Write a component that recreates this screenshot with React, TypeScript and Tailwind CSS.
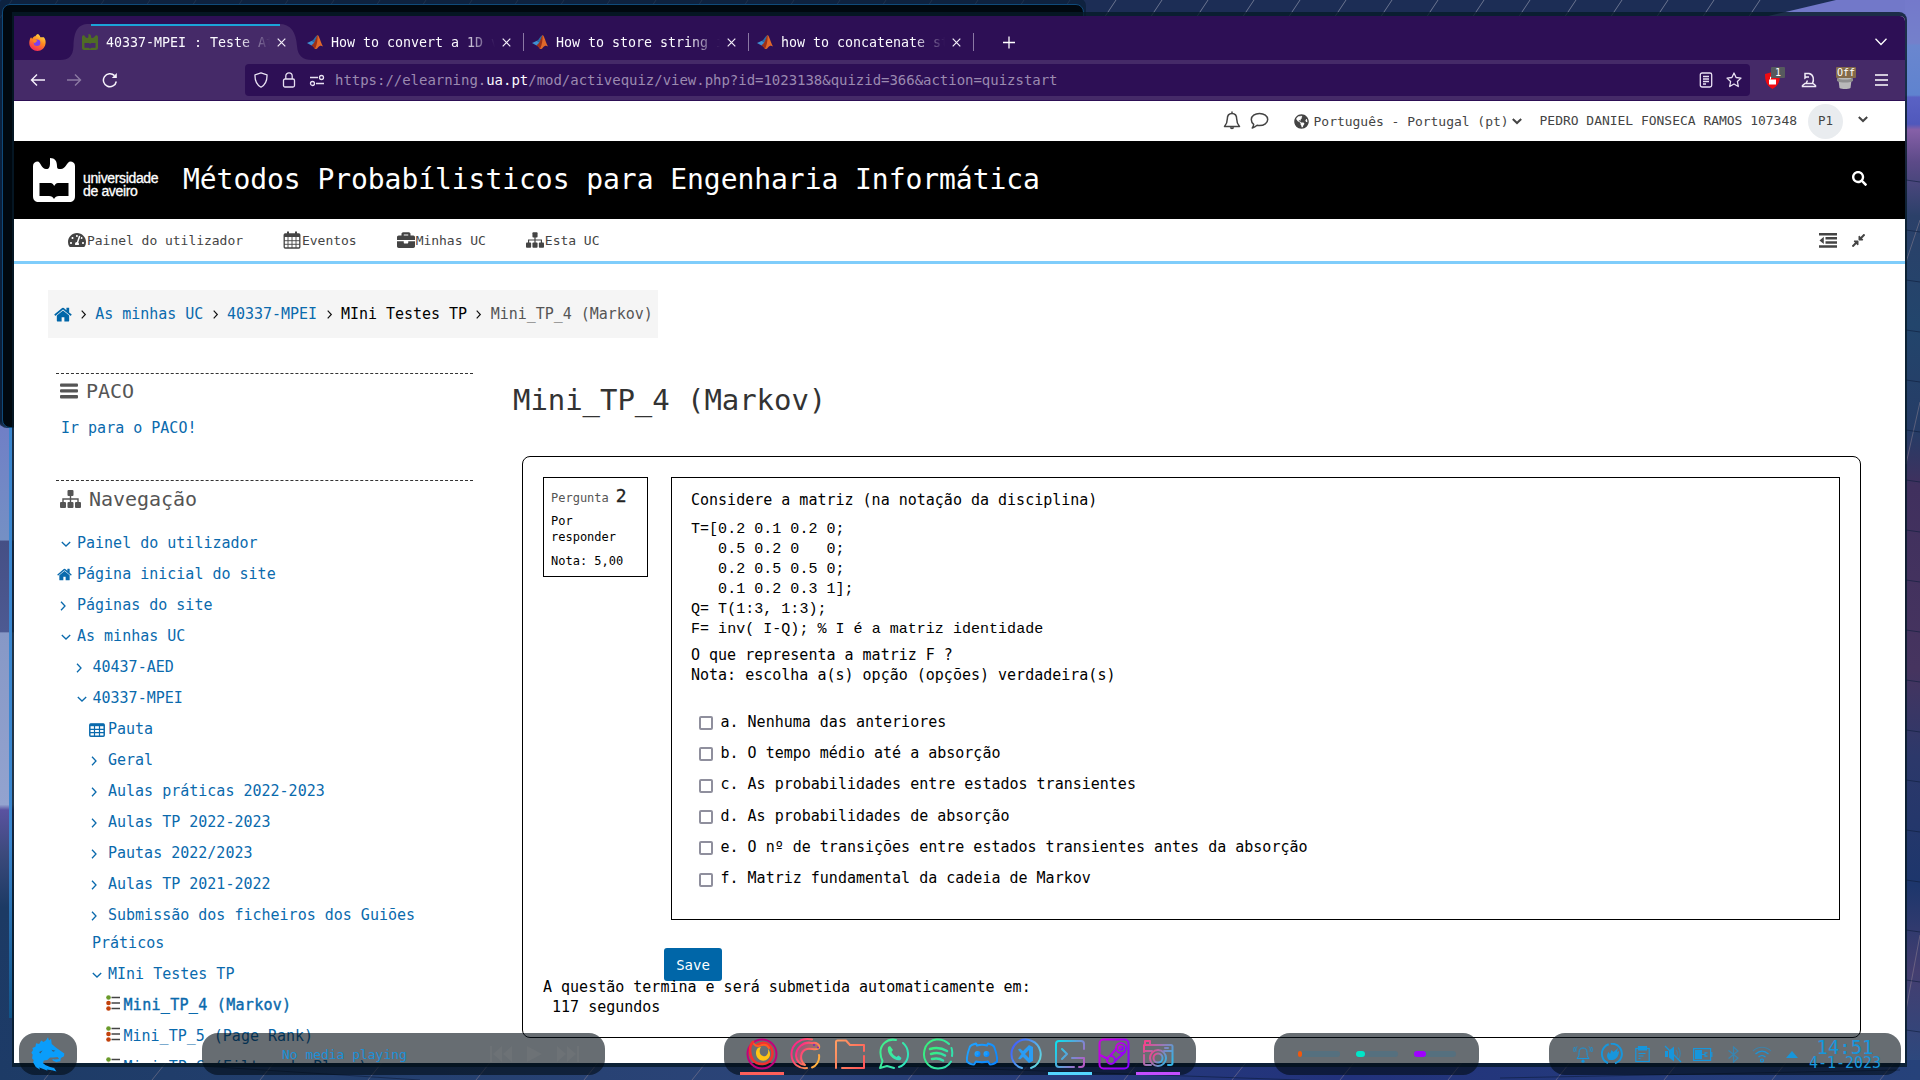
import React from "react";
import { FaTachometerAlt, FaBriefcase, FaCompressAlt, FaSearch, FaGlobeAmericas } from "react-icons/fa";

const mono = "font-['DejaVu_Sans_Mono',monospace] tracking-[-0.002em]";
const monoBody = "font-['DejaVu_Sans_Mono',monospace] tracking-normal";

/* ---------- Desktop ---------- */

function Wallpaper() {
  return (
    <svg className="absolute inset-0" width="1920" height="1080" viewBox="0 0 1920 1080">
      <defs>
        <linearGradient id="wl" x1="0" y1="0" x2="0" y2="1">
          <stop offset="0" stopColor="#10305c" />
          <stop offset="0.39" stopColor="#0c1a35" />
          <stop offset="0.395" stopColor="#707fc6" />
          <stop offset="0.5" stopColor="#7590c4" />
          <stop offset="0.501" stopColor="#454f85" />
          <stop offset="0.585" stopColor="#4d5a92" />
          <stop offset="0.586" stopColor="#8798c6" />
          <stop offset="0.745" stopColor="#93a3cf" />
          <stop offset="0.75" stopColor="#5a52a0" />
          <stop offset="0.79" stopColor="#3c4a7c" />
          <stop offset="0.84" stopColor="#1c3a64" />
          <stop offset="1" stopColor="#1d3b68" />
        </linearGradient>
        <linearGradient id="wr" x1="0" y1="0" x2="0" y2="1">
          <stop offset="0" stopColor="#7479cb" />
          <stop offset="0.04" stopColor="#7480cb" />
          <stop offset="0.042" stopColor="#6a86cf" />
          <stop offset="0.088" stopColor="#5f83cf" />
          <stop offset="0.09" stopColor="#5a62c4" />
          <stop offset="0.115" stopColor="#5058bc" />
          <stop offset="0.12" stopColor="#8660a8" />
          <stop offset="0.15" stopColor="#5c4a88" />
          <stop offset="0.2" stopColor="#2b4069" />
          <stop offset="0.3" stopColor="#22456c" />
          <stop offset="0.4" stopColor="#263c66" />
          <stop offset="0.45" stopColor="#40305e" />
          <stop offset="0.62" stopColor="#46345f" />
          <stop offset="0.7" stopColor="#2c386a" />
          <stop offset="0.82" stopColor="#1d366c" />
          <stop offset="0.9" stopColor="#443e70" />
          <stop offset="1" stopColor="#284a80" />
        </linearGradient>
        <linearGradient id="wb" x1="0" y1="0" x2="1" y2="0">
          <stop offset="0" stopColor="#1d3b66" />
          <stop offset="0.4" stopColor="#2b4478" />
          <stop offset="0.7" stopColor="#22327c" />
          <stop offset="1" stopColor="#26427a" />
        </linearGradient>
      </defs>
      <rect width="1920" height="1080" fill="#1c2d55" />
      <rect width="20" height="1080" fill="url(#wl)" />
      <rect x="1900" width="20" height="1080" fill="url(#wr)" />
      <g stroke="#8c93a8" strokeWidth="1" opacity="0.7">
        {Array.from({ length: 39 }, (_, i) => (
          <line key={i} x1={12 + i * 46} y1="0" x2={i * 46} y2="18" />
        ))}
      </g>
      <polygon points="1760,18 1836,0 1905,0 1905,18" fill="#7278c9" />
      <rect y="1060" width="1920" height="20" fill="url(#wb)" />
      <g stroke="#9a8a96" strokeWidth="1" opacity="0.45">
        {Array.from({ length: 18 }, (_, i) => (
          <line key={i} x1={60 + i * 108} y1="1060" x2={44 + i * 108} y2="1080" />
        ))}
        <line x1="1920" y1="220" x2="1906" y2="262" />
        <line x1="1920" y1="402" x2="1906" y2="464" />
        <line x1="1920" y1="935" x2="1906" y2="1010" />
      </g>
      <g stroke="#0d1c3c" strokeWidth="1" opacity="0.6">
        {Array.from({ length: 18 }, (_, i) => (
          <line key={i} x1="1906" y1={180 + i * 50} x2="1920" y2={182 + i * 50} />
        ))}
        <line x1="200" y1="1066" x2="420" y2="1080" />
        <line x1="900" y1="1066" x2="1300" y2="1080" />
        <line x1="1500" y1="1078" x2="1900" y2="1070" />
      </g>
    </svg>
  );
}

/* ---------- Browser chrome ---------- */

function FirefoxIcon() {
  return (
    <svg width="17" height="17" viewBox="0 0 16 16">
      <defs>
        <linearGradient id="ff" x1="0.8" y1="0" x2="0.3" y2="1">
          <stop offset="0" stopColor="#ffe14d" />
          <stop offset="0.45" stopColor="#ff8a1e" />
          <stop offset="1" stopColor="#f5245c" />
        </linearGradient>
      </defs>
      <path d="M8.500 0c1.200 1 2 2 2.200 3 1 .2 2.800-.2 3.300 0 1.500 2 2 4 1.500 6.500C14.800 13.500 11.800 16 8 16S.8 13.200.3 9.500C0 6.500 1 4 2 3c.3.800.6 1.200 1 1.400C4 2.500 5 2 6 2c.5-.9 1.500-1.800 2.500-2z" fill="url(#ff)" />
      <circle cx="7.600" cy="8.200" r="3.100" fill="#7b3ff0" />
      <path d="M4 5.500c2-.6 4 .2 4 1.400-1.200 0-2 .7-2 1.700-1.500 0-2.500-1.500-2-3.100z" fill="#ff8a1e" />
    </svg>
  );
}

function MatlabIcon() {
  return (
    <svg width="16" height="16" viewBox="0 0 16 16">
      <path d="M0 9l5-2.200 2.500 2L4.500 11.500z" fill="#3f8fd0" />
      <path d="M5 6.800C7.500 5.500 8 2 10.500 1L7.500 8.800z" fill="#2a6ea8" />
      <path d="M10.500 1C12.500 2 13.500 8 16 12.500c-2-1.500-3.500-1-5 1-1 1.500-2 1.800-3 1.500-.6-1.500-2-3-3.500-3.500C8 10 9 4.500 10.500 1z" fill="#e0682a" />
      <path d="M10.500 1C11 5 10 11 8 15c-.6-1.500-2-3-3.500-3.500C8 10 9 4.500 10.500 1z" fill="#9c2f18" />
    </svg>
  );
}

function Castle({ size, w, fill, page }: { size: number; w: number; fill: string; page: string }) {
  return (
    <svg width={w} height={size} viewBox="0 0 42 44" preserveAspectRatio="none">
      <path
        d="M0 8C0 5 2 3.500 5 3.500c2.500 1 4 7.500 8 7.500h1.500c3-1 2.500-6 2.500-11 5 0 7 3 7 8 0 2 .5 3 2 3h2c4 0 6-6.500 9-7.500C40 3.500 42 5 42 8v30c0 4-2 6-6 6H6c-4 0-6-2-6-6z"
        fill={fill}
      />
      <path d="M6.500 25h11c2 0 3 1.500 3.700 3 .7-1.500 1.900-3 3.800-3h10.500v13H26c-2.500 0-4 1-5 3-1-2-2.500-3-5-3H6.500z" fill={page} />
    </svg>
  );
}

function Close() {
  return (
    <svg width="9" height="9" viewBox="0 0 9 9" stroke="#f3eef8" strokeWidth="1.200">
      <path d="M.7.7l7.600 7.600M8.300.7L.7 8.300" />
    </svg>
  );
}

function Tab({ icon, title }: { icon: React.ReactNode; title: string }) {
  return (
    <div className="relative flex h-9 w-[225px] items-center pl-2">
      <span className="flex w-4 justify-center">{icon}</span>
      <span
        className={`ml-2 mt-px w-[164px] overflow-hidden whitespace-nowrap text-[13.33px] text-[#fbfaff] [mask-image:linear-gradient(to_left,transparent,black_2em)] ${mono}`}
      >
        {title}
      </span>
      <span className="ml-1.5 flex w-2.5 justify-center">
        <Close />
      </span>
    </div>
  );
}

function TabStrip() {
  return (
    <div className="flex h-11 items-start bg-[#2d0f55] pt-2">
      <div className="flex h-9 w-[60px] items-center pl-[15px]">
        <FirefoxIcon />
      </div>
      <div className="relative">
        <svg className="absolute -left-[14px] top-0" width="252" height="36" viewBox="0 0 252 36">
          <path d="M0 36c9 0 13-4 13.500-14C14 8 17 0 29 0h190c12 0 17 8 18 22 .7 10 6 14 15 14z" fill="#452a68" />
          <rect x="31" width="189" height="2" fill="#1ba3d8" />
        </svg>
        <Tab icon={<Castle w={16} size={16} fill="#4f6b26" page="#452a68" />} title="40337-MPEI : Teste At" />
      </div>
      {["How to convert a 1D v", "How to store string i", "how to concatenate st"].map((t) => (
        <div key={t} className="relative">
          <Tab icon={<MatlabIcon />} title={t} />
          <span className="absolute right-0 top-[9px] h-[18px] w-px bg-[#8a78a4]" />
        </div>
      ))}
      <svg className="ml-[29px] mt-3" width="12" height="13" viewBox="0 0 12 13" stroke="#fff" strokeWidth="1.300">
        <path d="M6 .5v12M0 6.500h12" />
      </svg>
      <svg className="ml-auto mr-[18px] mt-[14px]" width="12" height="8" viewBox="0 0 12 8" fill="none" stroke="#fff" strokeWidth="1.300">
        <path d="M.5.8L6 6.500 11.500.8" />
      </svg>
    </div>
  );
}

function Toolbar() {
  return (
    <div className="flex h-[41px] items-center border-b border-[#2d0f55] bg-[#452a68] text-[#f6f2fb]">
      <svg className="ml-4" width="16" height="16" viewBox="0 0 16 16" fill="none" stroke="currentColor" strokeWidth="1.400">
        <path d="M15 8H1.500M7 2.500L1.500 8 7 13.500" />
      </svg>
      <svg className="ml-5 opacity-40" width="16" height="16" viewBox="0 0 16 16" fill="none" stroke="currentColor" strokeWidth="1.400">
        <path d="M1 8h13.500M9 2.500L14.500 8 9 13.500" />
      </svg>
      <svg className="ml-5" width="16" height="16" viewBox="0 0 16 16" fill="none" stroke="currentColor" strokeWidth="1.500">
        <path d="M14.300 9.500A6.500 6.500 0 1 1 12.500 3.600" />
        <path d="M14.800 1v5h-5z" fill="currentColor" stroke="none" />
      </svg>
      <div className="ml-[127px] flex h-8 w-[1505px] items-center rounded bg-[#2d0f55]">
        <svg className="ml-2" width="16" height="16" viewBox="0 0 16 16" fill="none" stroke="#e8e0f2" strokeWidth="1.300">
          <path d="M8 .8l6 2c.2 5-.8 9.500-6 12.400C2.800 12.300 1.800 7.800 2 2.800z" strokeLinejoin="round" />
        </svg>
        <svg className="ml-3" width="16" height="16" viewBox="0 0 16 16" fill="none" stroke="#e8e0f2" strokeWidth="1.300">
          <rect x="2.500" y="7" width="11" height="8" rx="1.500" />
          <path d="M4.800 7V4a3.200 3.200 0 0 1 6.400 0v3" />
        </svg>
        <svg className="ml-3" width="16" height="16" viewBox="0 0 16 16" fill="none" stroke="#e8e0f2" strokeWidth="1.300">
          <path d="M1 5.500h8M7 11.500h8" />
          <circle cx="12.500" cy="5.500" r="2" />
          <circle cx="3.500" cy="11.500" r="2" />
        </svg>
        <span className={`ml-[10px] whitespace-pre text-[14px] text-[#9b8ab0] ${mono}`}>
          https://elearning.<span className="text-[#fbfaff]">ua.pt</span>/mod/activequiz/view.php?id=1023138&amp;quizid=366&amp;action=quizstart
        </span>
        <svg className="ml-auto" width="14" height="16" viewBox="0 0 14 16" fill="none" stroke="#e8e0f2" strokeWidth="1.300">
          <rect x="1.300" y="1" width="11.400" height="14" rx="1.800" />
          <path d="M4 4.500h6M4 7h6M4 9.500h6M4 12h3" />
        </svg>
        <svg className="ml-[13px] mr-2" width="16" height="16" viewBox="0 0 16 16" fill="none" stroke="#e8e0f2" strokeWidth="1.300">
          <path d="M8 1l2.100 4.500 4.900.6-3.600 3.400.9 5L8 12l-4.300 2.500.9-5L1 6.100l4.900-.6z" strokeLinejoin="round" />
        </svg>
      </div>
      <div className="relative ml-[15px] flex h-8 w-4 items-center">
        <svg width="15" height="17" viewBox="0 0 15 17">
          <path d="M7.500 0L15 2c0 6-1 11.500-7.500 15C1 13.500 0 8 0 2z" fill="#ef0b12" />
          <rect x="4" y="7.500" width="7" height="5" fill="#fff" />
          <path d="M5.500 7.500V5h4" fill="none" stroke="#fff" />
        </svg>
        <span className={`absolute left-[6px] top-[3px] flex h-[11px] w-[14px] items-center justify-center rounded-[1px] bg-[#565a5e] text-[10px] leading-none text-white ${mono}`}>1</span>
      </div>
      <svg className="ml-5" width="16" height="16" viewBox="0 0 16 16" fill="none" stroke="#f0eaf6" strokeWidth="1.500">
        <path d="M1.500 14.500h13v-1l-2.500-2h-8l-2.500 2zM5 11.500l1.500-3M11.500 11.500c1.500-3.500 1.500-9-3.500-10H4v4.500l1.500-1 2.500 0" />
      </svg>
      <div className="relative ml-5 flex h-8 w-4 items-center">
        <svg width="16" height="17" viewBox="0 0 16 17">
          <path d="M1 4h14l-1.500 12c-2.500 1.300-8.500 1.300-11 0z" fill="#b9b9b9" />
          <path d="M0 6c4 2 12 2 16 0v3c-4 2-12 2-16 0z" fill="#8f8f8f" />
        </svg>
        <span className={`absolute -left-px top-[3px] flex h-[11px] w-5 items-center justify-center rounded-[1px] bg-[#836a4a] text-[10px] leading-none text-white ${mono}`}>Off</span>
      </div>
      <svg className="ml-[22px]" width="13" height="12" viewBox="0 0 13 12" stroke="#fff" strokeWidth="1.300">
        <path d="M0 1h13M0 6h13M0 11h13" />
      </svg>
    </div>
  );
}

/* ---------- Page icons ---------- */

function HomeIcon({ className = "" }: { className?: string }) {
  return (
    <svg className={className} viewBox="60 190 1672 1400" fill="currentColor">
      <path d="M1472 992v480q0 26-19 45t-45 19h-384v-384H768v384H384q-26 0-45-19t-19-45V992q0-1 .5-3t.5-3l575-474 575 474q1 2 1 6zm223-69l-62 74q-8 9-21 11h-3q-13 0-21-7L896 424 204 1001q-12 8-24 7-13-2-21-11l-62-74q-8-10-7-23.500T101 878l719-599q32-26 76-26t76 26l244 204V288q0-14 9-23t23-9h192q14 0 23 9t9 23v408l219 182q10 8 11 21.500t-7 23.500z" />
    </svg>
  );
}

function BarsIcon() {
  return (
    <svg width="18" height="16" viewBox="0 0 18 16" fill="currentColor">
      <rect y="0.500" width="18" height="3.300" rx="1" />
      <rect y="6.300" width="18" height="3.300" rx="1" />
      <rect y="12.100" width="18" height="3.300" rx="1" />
    </svg>
  );
}

function TreeIcon({ className = "" }: { className?: string }) {
  return (
    <svg className={className} viewBox="0 0 21 18" fill="currentColor">
      <rect x="7.500" width="6" height="6" rx="1" />
      <rect y="12" width="6" height="6" rx="1" />
      <rect x="7.500" y="12" width="6" height="6" rx="1" />
      <rect x="15" y="12" width="6" height="6" rx="1" />
      <path d="M10.500 5v8M3 13V9h15v4" fill="none" stroke="currentColor" strokeWidth="1.400" />
    </svg>
  );
}

function CalendarIcon({ className = "" }: { className?: string }) {
  return (
    <svg className={className} viewBox="0 0 18 18" fill="none" stroke="currentColor">
      <rect x="1.200" y="3" width="15.600" height="14" rx="1" strokeWidth="1.300" />
      <path d="M1 4.500h16" strokeWidth="3" />
      <path d="M5 6v11M9 6v11M13 6v11M1 9.700h16M1 13.300h16" strokeWidth="0.900" />
      <path d="M5 .5v4M13 .5v4" strokeWidth="2" />
    </svg>
  );
}

function TableIcon() {
  return (
    <svg className="mr-[3px]" width="16" height="14" viewBox="0 0 16 14" fill="none" stroke="currentColor">
      <rect x=".8" y="1" width="14.400" height="12.200" rx="1" strokeWidth="1.500" />
      <path d="M1 2h14" strokeWidth="2.400" />
      <path d="M5.500 2v11M10.500 2v11M1 6.300h14M1 9.700h14" strokeWidth="1.200" />
    </svg>
  );
}

function OutdentIcon() {
  return (
    <svg width="18" height="15" viewBox="0 0 18 15" fill="currentColor">
      <path d="M0 0h18v2.500H0zM6.500 4.100H18v2.500H6.500zM6.500 8.200H18v2.500H6.500zM0 12.300h18v2.500H0zM4.800 3.800v7.200L.5 7.400z" />
    </svg>
  );
}

function Chevron({ dir, className = "", w = 1.3 }: { dir: "right" | "down"; className?: string; w?: number }) {
  return (
    <svg className={className} width="10" height="10" viewBox="0 0 10 10" fill="none" stroke="currentColor" strokeWidth={w}>
      <path d={dir === "right" ? "M3 .8L7 5 3 9.200" : "M.8 3L5 7l4.200-4"} />
    </svg>
  );
}

/* ---------- Page ---------- */

function UserBar() {
  return (
    <div className={`flex h-10 items-center justify-end text-[13px] text-[#444] ${mono}`}>
      <svg className="-mt-0.5" width="18" height="19" viewBox="0 0 18 19" fill="none" stroke="#444" strokeWidth="1.500">
        <path d="M9 2.500C5.800 2.500 4.300 5 4.300 8c0 4-1.300 5.800-2.800 7.500h15c-1.500-1.700-2.800-3.500-2.800-7.500 0-3-1.500-5.500-4.700-5.500zM9 .5v2" strokeLinejoin="round" />
        <path d="M6.800 16.300h4.400c-.2 1.300-1 2-2.200 2s-2-.7-2.200-2z" fill="#444" stroke="none" />
      </svg>
      <svg className="-mt-0.5 ml-[9px]" width="19" height="17" viewBox="0 0 19 17" fill="none" stroke="#444" strokeWidth="1.500">
        <path d="M9.500 1.500c4.600 0 8.200 2.600 8.200 6s-3.600 6-8.200 6c-.8 0-1.600-.1-2.400-.2C5.800 14.500 4.300 15.500 2.300 16c.7-1 1.300-2 1.400-3.700C2.200 11.200 1.300 9.500 1.300 7.500c0-3.400 3.600-6 8.200-6z" strokeLinejoin="round" />
      </svg>
      <FaGlobeAmericas className="ml-[25px] text-[15px]" />
      <span className="ml-[5px] mt-px whitespace-nowrap">Português - Portugal (pt)</span>
      <Chevron dir="down" w={2} className="ml-[3px]" />
      <span className="ml-[18px] whitespace-nowrap">PEDRO DANIEL FONSECA RAMOS 107348</span>
      <span className="ml-[11px] flex size-[35px] items-center justify-center rounded-full bg-[#e9ecef] pt-px text-[12.5px]">P1</span>
      <Chevron dir="down" w={2} className="-mt-1 ml-[15px] mr-[37px]" />
    </div>
  );
}

function SiteHeader() {
  return (
    <header className="flex h-[78px] items-center bg-black pl-[19px] text-white">
      <Castle w={42} size={44} fill="#fff" page="#000" />
      <div className="ml-2 mt-[9px] w-[100px] whitespace-nowrap font-['Liberation_Sans',sans-serif] text-[14px] leading-[13px] tracking-[-0.35px] [-webkit-text-stroke:0.3px_white]">
        universidade
        <br />
        de aveiro
      </div>
      <h1 className={`whitespace-nowrap text-[28px] leading-[34px] ${mono}`}>
        Métodos Probabílisticos para Engenharia Informática
      </h1>
      <FaSearch className="-mt-[3px] ml-auto mr-[38px] text-[15px]" />
    </header>
  );
}

function MenuBar() {
  const items = [
    { icon: FaTachometerAlt, label: "Painel do utilizador" },
    { icon: CalendarIcon, label: "Eventos" },
    { icon: FaBriefcase, label: "Minhas UC" },
    { icon: TreeIcon, label: "Esta UC" },
  ];
  return (
    <nav className={`flex h-[45px] items-center gap-10 border-b-[3px] border-[#7fcdfb] pl-[54px] text-[13px] text-[#444] ${mono}`}>
      {items.map(({ icon: Icon, label }) => (
        <span key={label} className="flex items-center gap-px whitespace-nowrap">
          <Icon className="size-[18px]" />
          <span className="mt-px">{label}</span>
        </span>
      ))}
      <span className="ml-auto mr-[39px] flex items-center gap-[14px]">
        <OutdentIcon />
        <FaCompressAlt className="size-[15px]" />
      </span>
    </nav>
  );
}

function Breadcrumb() {
  const parts = [
    { t: "As minhas UC", c: "text-[#0a6aad]" },
    { t: "40337-MPEI", c: "text-[#0a6aad]" },
    { t: "MIni Testes TP", c: "text-black" },
    { t: "Mini_TP_4 (Markov)", c: "text-[#555]" },
  ];
  return (
    <div className={`ml-[34px] mt-[26px] flex h-12 w-[610px] items-center bg-[#f5f5f5] pl-[5.5px] text-[15px] ${mono}`}>
      <HomeIcon className="h-[15px] w-[18px] text-[#0066a8]" />
      {parts.map((p) => (
        <React.Fragment key={p.t}>
          <span className="flex w-[23.8px] justify-center text-[#111]">
            <Chevron dir="right" className="size-[9px]" />
          </span>
          <span className={`whitespace-nowrap ${p.c}`}>{p.t}</span>
        </React.Fragment>
      ))}
    </div>
  );
}

function QuizIcon() {
  return (
    <svg width="14" height="16" viewBox="0 0 14 16">
      <circle cx="2.500" cy="2.500" r="2.300" fill="#6a9a2a" />
      <circle cx="2.500" cy="8" r="2.300" fill="#c2410c" />
      <circle cx="2.500" cy="13.500" r="2.300" fill="#c2410c" />
      <path d="M5.500 2.500H14M5.500 8H14M5.500 13.500H14" stroke="#444" strokeWidth="1.600" />
    </svg>
  );
}

type NavRow = { icon: "right" | "down" | "home" | "table" | "quiz"; label: string; level: 0 | 1 | 2 | 3; bold?: boolean; wrap?: string };

const navRows: NavRow[] = [
  { icon: "down", label: "Painel do utilizador", level: 0 },
  { icon: "home", label: "Página inicial do site", level: 0 },
  { icon: "right", label: "Páginas do site", level: 0 },
  { icon: "down", label: "As minhas UC", level: 0 },
  { icon: "right", label: "40437-AED", level: 1 },
  { icon: "down", label: "40337-MPEI", level: 1 },
  { icon: "table", label: "Pauta", level: 2 },
  { icon: "right", label: "Geral", level: 2 },
  { icon: "right", label: "Aulas práticas 2022-2023", level: 2 },
  { icon: "right", label: "Aulas TP 2022-2023", level: 2 },
  { icon: "right", label: "Pautas 2022/2023", level: 2 },
  { icon: "right", label: "Aulas TP 2021-2022", level: 2 },
  { icon: "right", label: "Submissão dos ficheiros dos Guiões", level: 2, wrap: "Práticos" },
  { icon: "down", label: "MIni Testes TP", level: 2 },
  { icon: "quiz", label: "Mini_TP_4 (Markov)", level: 3, bold: true },
  { icon: "quiz", label: "Mini_TP_5 (Page Rank)", level: 3 },
  { icon: "quiz", label: "Mini_TP_6 (Filtro de Bloom)", level: 3 },
];

const indent = ["pl-0", "pl-[15.5px]", "pl-[31px]", "pl-[46.5px]"];

function NavIcon({ icon }: { icon: NavRow["icon"] }) {
  if (icon === "home") return <HomeIcon className="mr-[5px] h-[13px] w-[15px]" />;
  if (icon === "table") return <TableIcon />;
  if (icon === "quiz")
    return (
      <span className="mb-1.5 mr-1">
        <QuizIcon />
      </span>
    );
  return <Chevron dir={icon} className={icon === "down" ? "mr-1.5" : "mr-[9px]"} />;
}

function Sidebar() {
  return (
    <aside className={`w-[417px] shrink-0 pt-[35px] text-[15px] text-[#0a6aad] ${monoBody}`}>
      <section className="h-[107px] border-t border-dashed border-[#333]">
        <h2 className={`flex h-[34px] items-center gap-2 pl-1 text-[20px] text-[#555] ${mono}`}>
          <BarsIcon />
          PACO
        </h2>
        <p className="mt-1 pl-[5px] leading-[32px]">Ir para o PACO!</p>
      </section>
      <section className="border-t border-dashed border-[#333]">
        <h2 className={`flex h-9 items-center gap-2 pl-1 text-[20px] text-[#555] ${mono}`}>
          <TreeIcon className="h-[18px] w-[21px]" />
          Navegação
        </h2>
        <ul className="mt-[11px]">
          {navRows.map((r) => (
            <li key={r.label} className={indent[r.level]}>
              <div className="flex h-[31px] items-center whitespace-nowrap">
                <span className="flex w-[21px] shrink-0 justify-end">
                  <NavIcon icon={r.icon} />
                </span>
                <span className={r.bold ? "tracking-[0.3px] [-webkit-text-stroke:0.4px_#0a6aad]" : ""}>{r.label}</span>
              </div>
              {r.wrap && <div className="h-7 pl-[5px] leading-[24px]">{r.wrap}</div>}
            </li>
          ))}
        </ul>
      </section>
    </aside>
  );
}

const code = `T=[0.2 0.1 0.2 0;
   0.5 0.2 0   0;
   0.2 0.5 0.5 0;
   0.1 0.2 0.3 1];
Q= T(1:3, 1:3);
F= inv( I-Q); % I é a matriz identidade`;

const answers = [
  "a. Nenhuma das anteriores",
  "b. O tempo médio até a absorção",
  "c. As probabilidades entre estados transientes",
  "d. As probabilidades de absorção",
  "e. O nº de transições entre estados transientes antes da absorção",
  "f. Matriz fundamental da cadeia de Markov",
];

function Quiz() {
  return (
    <main className={`pl-[39px] pt-[41px] text-[15px] leading-5 text-black ${monoBody}`}>
      <h2 className={`pl-px text-[29px] leading-[42px] text-[#333] ${mono}`}>Mini_TP_4 (Markov)</h2>
      <div className="ml-[10px] mt-[35px] h-[582px] w-[1339px] rounded-[8px] border border-black pl-5 pt-5">
        <div className="flex items-start gap-[23px]">
          <div className="h-[100px] w-[105px] border border-black pl-[7px] text-[12px] leading-4">
            <p className="mt-2 flex h-5 items-baseline gap-[7px] text-[#555]">
              Pergunta <span className="text-[18px] leading-5 text-[#222] [-webkit-text-stroke:0.3px_#222]">2</span>
            </p>
            <p className="mt-[7px]">
              Por
              <br />
              responder
            </p>
            <p className="mt-2">Nota: 5,00</p>
          </div>
          <div className="h-[443px] w-[1169px] border border-black pl-[19px] pt-3">
            <p>Considere a matriz (na notação da disciplina)</p>
            <pre className="mt-[10px] font-['Liberation_Mono',monospace] text-[15px] leading-5 tracking-[0.03px]">{code}</pre>
            <p className="mt-[5px]">
              O que representa a matriz F ?
              <br />
              Nota: escolha a(s) opção (opções) verdadeira(s)
            </p>
            <div className="mt-[21px]">
              {answers.map((a) => (
                <label key={a} className="flex h-[31.3px] items-center pl-2">
                  <span className="mt-[3px] size-[14px] rounded-[2px] border-2 border-[#8f8f9d] bg-white" />
                  <span className="ml-[7.5px] whitespace-nowrap">{a}</span>
                </label>
              ))}
            </div>
          </div>
        </div>
        <button className="ml-[121px] mt-7 block h-[33px] w-[58px] rounded-[3px] bg-[#0066a8] text-[14px] text-white">Save</button>
        <div className="relative -mt-1 whitespace-pre">
          {"A questão termina e será submetida automaticamente em:\n 117 segundos"}
        </div>
      </div>
    </main>
  );
}

function Browser() {
  return (
    <div className="absolute left-3 top-3 h-[1055px] w-[1895px] overflow-hidden rounded-tr-[8px] bg-[#061a28]/80 px-0.5 pt-1">
      <div className="h-[1047px] w-[1891px] overflow-hidden rounded-tr-[5px] bg-white">
        <TabStrip />
        <Toolbar />
        <UserBar />
        <SiteHeader />
        <MenuBar />
        <Breadcrumb />
        <div className="ml-[42px] flex items-start">
          <Sidebar />
          <Quiz />
        </div>
      </div>
    </div>
  );
}

/* ---------- Dock ---------- */

const panel = "absolute top-[1033px] h-[42px] rounded-[16px] bg-[#020c14]/60";

function Wolf() {
  return (
    <svg width="34" height="35" viewBox="0 0 100 102" fill="#0a9dfb">
      <polygon points="50,0 53,10 59,5 61,20 74,31 98,48 97,56 88,61 86,71 74,73 64,69 63,64 70,66 83,64 78,58 66,60 56,60 48,67 38,69 35,76 42,82 54,87 68,91 75,101 62,97 46,95 49,99 34,93 24,89 27,96 14,88 6,74 8,68 3,62 5,52 1,46 6,38 4,32 13,28 15,18 24,20 30,10 37,14 44,9" />
      <path d="M60 37l12 3-7 3zM24 44l10-5-7 9z" fill="#3d5a70" />
    </svg>
  );
}

function Grad({ id, a, b }: { id: string; a: string; b: string }) {
  return (
    <defs>
      <linearGradient id={id} x1="0" y1="0.2" x2="1" y2="0.8">
        <stop offset="0" stopColor={a} />
        <stop offset="1" stopColor={b} />
      </linearGradient>
    </defs>
  );
}

function DockIcon({ id, a, b, children }: { id: string; a: string; b: string; children: React.ReactNode }) {
  return (
    <svg width="32" height="32" viewBox="0 0 32 32" fill="none" stroke={`url(#${id})`} strokeWidth="2" strokeLinecap="round" strokeLinejoin="round">
      <Grad id={id} a={a} b={b} />
      {children}
    </svg>
  );
}

const dock: { id: string; a: string; b: string; line?: string; art: React.ReactNode }[] = [
  {
    id: "d0", a: "#c2007a", b: "#c2007a", line: "bg-[#ff5f5a]",
    art: (
      <>
        <circle cx="16" cy="16" r="14.500" />
        <path d="M7 4C3 8 3 17 7 22c5 6 15 5 18-1 3-5 1-12-2-14C20 4 15 4 11 7" stroke="#f4302f" strokeWidth="2.600" />
        <path d="M15 9c-6 0-7 10-1 13 5 2 10-1 10-6 0-2-1-4-2-5 1 5-2 8-5 7-4-1-4-6-2-9z" fill="#ffc414" stroke="none" />
        <path d="M8 6c3 4 6 2 8 1 4-1 6 1 7 3" stroke="#ff5a22" />
      </>
    ),
  },
  {
    id: "d1", a: "#ff1a8c", b: "#ffb83a",
    art: (
      <>
        <path d="M22 1.500C10-1 1 7 1.500 17 2 26 9 31 17 30M29 17c1 6-3 11-7 12.500" />
        <path d="M22 5C13 3 6 10 6 18c.5 5 4 9 9 9-6-5-5-14 2-16 4-1 10 2 12-1 1-3-2-6-7-5z" fill="url(#d1)" fillOpacity="0.350" />
        <circle cx="24" cy="7" r="1" fill="#7a20c0" stroke="none" />
        <circle cx="28" cy="9.500" r="1" fill="#7a20c0" stroke="none" />
      </>
    ),
  },
  { id: "d2", a: "#ff9a62", b: "#ff5a5a", art: <path d="M2 30V4c0-1 .5-1.500 1.500-1.500H12l4 4.500h14v6M30 18v12H8" /> },
  {
    id: "d3", a: "#42f08a", b: "#30e2c0",
    art: (
      <>
        <path d="M18 2C9 0 2 7 2.500 15c0 4 1 6 2 8L2 30l7-2 7 2M25 5c6 5 7 15 1 21-2 2-3 2.500-5 3" />
        <path d="M10 9l2-1 3 4-1.500 2c1 2 3 4 5 5l2-1.500 3 2.500-1 2C18 24 8 17 10 9z" fill="url(#d3)" stroke="none" />
      </>
    ),
  },
  {
    id: "d4", a: "#38f07c", b: "#30e0b4",
    art: (
      <>
        <path d="M27 6C20-1 8 0 3.500 9-1 20 5 30 16 30.500c6 0 10-2 13-7M29.500 10c1 3 1 5 .5 8" />
        <path d="M8 11c6-2 12-1 17 2M9 16c5-1.500 10-1 14 1.500M10 21c4-1 8-.5 11 1.500" strokeWidth="2.500" />
      </>
    ),
  },
  {
    id: "d5", a: "#1fa2ff", b: "#0a86ff",
    art: (
      <>
        <path d="M11 7.500c3-1 7-1 10 0l1-2c2 .5 5 1.500 6 3 2 5 3.500 10 3 15-2 2-5 3-7 3l-2-3c-4 1-8 1-12 0l-2 3c-2 0-5-1-7-3-.5-5 1-10 3-15 1-1.500 4-2.500 6-3z" />
        <circle cx="11.500" cy="16" r="2" fill="#1fa2ff" />
        <circle cx="20.500" cy="16" r="2" fill="#1fa2ff" />
      </>
    ),
  },
  {
    id: "d6", a: "#3f5cff", b: "#62dde0",
    art: (
      <>
        <path d="M12 30C4 28 0 20 2 12 5 3 14-1 22 3c9 4 11 15 6 22-2 3-4 4-7 5" />
        <path d="M19 7l4 2v14l-4 2-6-6-3 2.500-2-1L11.500 16 8 11.500l2-1 3 2.500zM19 12l-4 4 4 4z" fill="#2a9df5" fillRule="evenodd" stroke="none" />
      </>
    ),
  },
  { id: "d7", a: "#12dcec", b: "#b45cc4", line: "bg-[#55d6ff]", art: <path d="M20 29H5c-2 0-3-1-3-3V6c0-2 1-3 3-3h22c2 0 3 1 3 3v5M30 20H18M30 20v6c0 2-1 3-3 3h-2M8 11l5 5-5 5" /> },
  {
    id: "d8", a: "#c800e0", b: "#8a00ff",
    art: (
      <>
        <rect x="1.500" y="1.500" width="29" height="29" rx="4" />
        <circle cx="23" cy="10" r="5" />
        <circle cx="23" cy="10" r="1.800" />
        <circle cx="13" cy="22" r="4" />
        <path d="M18 11l-6 7M27 14l-10 9M2 17l8 4" />
      </>
    ),
  },
  {
    id: "d9", a: "#f0448c", b: "#35b4e6", line: "bg-[#c44dff]",
    art: (
      <>
        <path d="M2 14V7h27c1 0 1.500.5 1.500 1.500V25c0 1-.5 2-2 2H26M2 17v8c0 1 .5 2 2 2h5M2 13h8M22 13h8M3 7V3h5v4M23 10h3" />
        <circle cx="16" cy="20" r="8" />
        <circle cx="16" cy="20" r="4.500" />
      </>
    ),
  },
];

function Dock() {
  return (
    <div className={`${panel} left-[724px] flex w-[472px] pl-4`}>
      {dock.map((d) => (
        <div key={d.id} className="flex w-11 flex-col items-center pt-[5px]">
          <DockIcon id={d.id} a={d.a} b={d.b}>
            {d.art}
          </DockIcon>
          {d.line && <span className={`mt-0.5 h-[3px] w-11 ${d.line}`} />}
        </div>
      ))}
    </div>
  );
}

function Meter({ w, color }: { w: string; color: string }) {
  return (
    <span className="flex h-[6px] w-[42px] items-center rounded-full bg-[#55707f]">
      <span className={`h-full rounded-full ${w} ${color}`} />
    </span>
  );
}

function Tray() {
  const s = { fill: "none", stroke: "#1796dc", strokeWidth: 1.2 };
  return (
    <div className={`${panel} left-[1549px] flex w-[352px] items-center pl-6 text-[#1796dc] ${mono}`}>
      <svg className="shrink-0" width="20" height="18" viewBox="0 0 20 18" {...s}>
        <path d="M4 13.500c2-2 2-4 2-6C6 4.500 7.500 3 10 3s4 1.500 4 4.500c0 2 0 4 2 6zM4 1.500C2.500 3 2.500 4.500 3 6.500M1.500 2C.5 4 .5 5 1.300 7M16 1.500c1.500 1.500 1.500 3 1 5M18.500 2c1 2 1 3 .2 5" strokeWidth="1" />
        <circle cx="10" cy="16.200" r="1.600" fill="#1796dc" stroke="none" />
      </svg>
      <svg className="ml-2 shrink-0" width="22" height="22" viewBox="0 0 22 22" {...s}>
        <path d="M7 20A10 10 0 1 1 14 20.300" strokeWidth="2" strokeDasharray="24 2 40 3" />
        <path d="M8 17c-3-3-2-6-.5-8L9 11l1.500-4 2 2L17 5l-1 4 2-1c0 4-2 8-6 9z" fill="#1796dc" stroke="none" />
      </svg>
      <svg className="ml-3 shrink-0" width="15" height="16" viewBox="0 0 15 16" {...s}>
        <rect x=".8" y="2.500" width="13.400" height="13" />
        <path d="M3.500 0h8v4h-8z" fill="#1796dc" />
        <path d="M3.500 7.500h7M3.500 10h5M3.500 12.500h2" />
      </svg>
      <svg className="ml-[14px] shrink-0" width="18" height="18" viewBox="0 0 18 18" {...s}>
        <path d="M1 6h3v6H1zM5 5.500l5-4v15l-5-4z" fill="#1796dc" stroke="none" />
        <path d="M1 1l16 16" />
        <path d="M12 5c2 2 2 6 0 8M14 2.500c3 3 3 9 0 12.500" opacity=".5" />
      </svg>
      <svg className="ml-[11px] shrink-0" width="20" height="13" viewBox="0 0 20 13" {...s}>
        <rect x=".6" y=".6" width="17" height="11.800" />
        <rect x="2" y="2" width="7" height="9" fill="#1796dc" stroke="none" />
        <path d="M18.800 4v5M9 6.500h3M14.500 4.800H12v3.400h2.500" strokeWidth="1.200" />
      </svg>
      <svg className="ml-[14px] shrink-0 opacity-60" width="13" height="17" viewBox="0 0 13 17" {...s}>
        <path d="M1.500 4.500L11 12l-4.500 4V1L11 5 1.500 12.500" />
      </svg>
      <svg className="ml-3 shrink-0" width="20" height="17" viewBox="0 0 20 17" {...s}>
        <path d="M1 5c5-5 13-5 18 0" opacity=".5" />
        <path d="M3.500 8c4-3.500 9-3.500 13 0M6.500 11c2-2 5-2 7 0" />
        <circle cx="10" cy="14.500" r="1.500" />
      </svg>
      <svg className="ml-3.5 shrink-0" width="12" height="7" viewBox="0 0 12 7" fill="#1796dc">
        <path d="M6 0l6 7H0z" />
      </svg>
      <div className="ml-[9px] mt-px w-[76px] shrink-0 text-center">
        <div className="text-[19px] leading-[17px]">14:51</div>
        <div className="text-[15px] leading-[15px]">4-1-2023</div>
      </div>
    </div>
  );
}

export default function App() {
  return (
    <div className="relative h-[1080px] w-[1920px] overflow-hidden bg-[#1c2d55]">
      <Wallpaper />
      <div className="absolute -left-px -top-[2px] h-[430px] w-[1087px] rounded-[8px] bg-[#0b1f3a]/80" />
      <div className="absolute left-0.5 top-1 h-[424px] w-[1082px] rounded-[8px] border border-[#0f4a7a] bg-[#00080f]" />
      <div className="absolute left-[9px] top-[428px] h-[590px] w-[3px] bg-gradient-to-b from-[#3a86cf] from-70% to-[#10558a]" />
      <Browser />

      <div className={`${panel} left-[19px] flex w-[58px] justify-center pt-1`}>
        <Wolf />
      </div>
      <div className={`${panel} left-[202px] flex w-[403px] items-center pl-20`}>
        <span className={`mt-px whitespace-nowrap text-[13px] text-[#1a90d8] ${mono}`}>No media playing</span>
        <svg className="ml-[83px]" width="90" height="16" viewBox="0 0 90 16" fill="#6d7276">
          <path d="M0 0h2v16H0zM12 0v16L3 8zM22 0v16l-9-8zM37 0l15 8-15 8zM67 0v16l9-8zM77 0v16l9-8zM87 0h2v16h-2z" />
        </svg>
      </div>
      <Dock />
      <div className={`${panel} left-[1274px] flex w-[205px] items-center justify-center gap-4`}>
        <Meter w="w-1" color="bg-[#f2580c]" />
        <Meter w="w-[9px]" color="bg-[#00e6c8]" />
        <Meter w="w-3" color="bg-[#a000ff]" />
      </div>
      <Tray />
    </div>
  );
}
